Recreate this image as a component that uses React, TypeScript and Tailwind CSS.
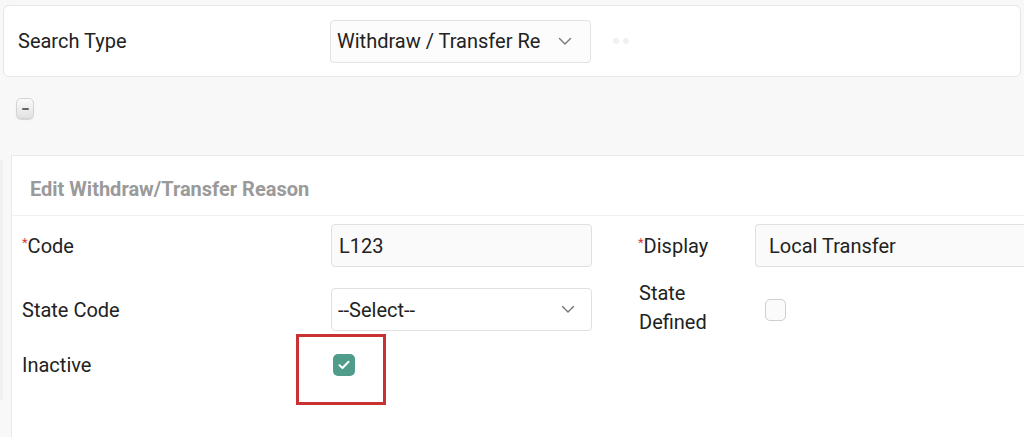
import React from 'react';

const Chevron: React.FC = () => (
  <svg width="14" height="9" viewBox="0 0 14 9" fill="none" className="shrink-0">
    <path d="M1.5 1.5 L7 7 L12.5 1.5" stroke="#777" strokeWidth="1.4" strokeLinecap="round" strokeLinejoin="round" />
  </svg>
);

const Req: React.FC<{ text: string }> = ({ text }) => (
  <span>
    <span className="text-[#d63a3a] text-[13px] align-top relative top-[2px]">*</span>
    {text}
  </span>
);

const App: React.FC = () => {
  return (
    <div className="w-[1024px] h-[437px] overflow-hidden bg-[#f8f8f8] font-['Roboto','Liberation_Sans',sans-serif] text-[#222] pt-[5px]">
      {/* Search bar card */}
      <div className="mx-[3px] h-[72px] bg-white border border-[#e6e6e6] rounded-md flex items-center">
        <div className="w-[326px] pl-[14px] text-[20px]">Search Type</div>
        <div className="w-[261px] h-[43px] bg-[#fcfcfc] border border-[#e2e2e2] rounded flex items-center justify-between pl-[6px] pr-[18px] text-[20px]">
          <span>Withdraw / Transfer Re</span>
          <Chevron />
        </div>
        <div className="flex gap-[4px] ml-[22px]">
          <span className="w-[6px] h-[6px] rounded-full bg-[#f0f0f0]" />
          <span className="w-[6px] h-[6px] rounded-full bg-[#f0f0f0]" />
        </div>
      </div>

      {/* Collapse button */}
      <div className="pl-[16px] pt-[21px] h-[78px]">
        <div className="w-[18px] h-[21px] rounded-[5px] border border-[#d4d4d4] bg-gradient-to-b from-[#fafafa] to-[#e2e2e2] shadow-[0_1px_1px_rgba(0,0,0,0.15)] flex items-center justify-center">
          <span className="w-[7px] h-[2px] bg-[#666] rounded-sm" />
        </div>
      </div>

      {/* Edit panel */}
      <div className="flex">
        <div className="w-[3px] h-[240px] mt-[5px] bg-[#f1f1f1]" />
        <div className="ml-[8px] flex-1 h-[282px] bg-white border-l border-t border-[#e8e8e8]">
          <div className="h-[60px] border-b border-[#f0f0f0] flex items-center pt-[6px] pl-[18px] text-[20px] font-bold text-[#9a9a9a]">
            Edit Withdraw/Transfer Reason
          </div>

          <div className="pl-[10px] pt-[8px] flex flex-col gap-[21px] text-[20px]">
            <div className="flex items-center h-[43px]">
              <div className="w-[309px]"><Req text="Code" /></div>
              <div className="w-[261px] h-[43px] bg-[#fafafa] border border-[#e0e0e0] rounded flex items-center pl-[7px]">
                L123
              </div>
              <div className="w-[117px] ml-[46px]"><Req text="Display" /></div>
              <div className="flex-1 h-[43px] bg-[#fafafa] border border-r-0 border-[#e0e0e0] rounded-l flex items-center pl-[13px]">
                Local Transfer
              </div>
            </div>

            <div className="flex items-center h-[43px]">
              <div className="w-[309px]">State Code</div>
              <div className="w-[261px] h-[43px] bg-white border border-[#e0e0e0] rounded flex items-center justify-between pl-[6px] pr-[16px]">
                <span>--Select--</span>
                <Chevron />
              </div>
              <div className="w-[126px] ml-[47px] leading-[29px] -mt-[3px]">State<br />Defined</div>
              <div className="w-[21px] h-[22px] rounded-[5px] border border-[#cfcfcf] bg-[#fbfbfb]" />
            </div>

            <div className="flex items-center h-[42px] -mt-[8px]">
              <div className="w-[311px]">Inactive</div>
              <div className="relative">
                <div className="w-[22px] h-[22px] rounded-[5px] bg-[#4f9c8b] flex items-center justify-center">
                  <svg width="12" height="10" viewBox="0 0 12 10" fill="none">
                    <path d="M1.5 5.2 L4.5 8 L10.5 1.8" stroke="white" strokeWidth="2" strokeLinecap="round" strokeLinejoin="round" />
                  </svg>
                </div>
                <div className="absolute left-[-37px] top-[-20px] w-[90px] h-[71px] border-[3px] border-[#c93232]" />
              </div>
            </div>
          </div>
        </div>
      </div>
    </div>
  );
};

export default App;
